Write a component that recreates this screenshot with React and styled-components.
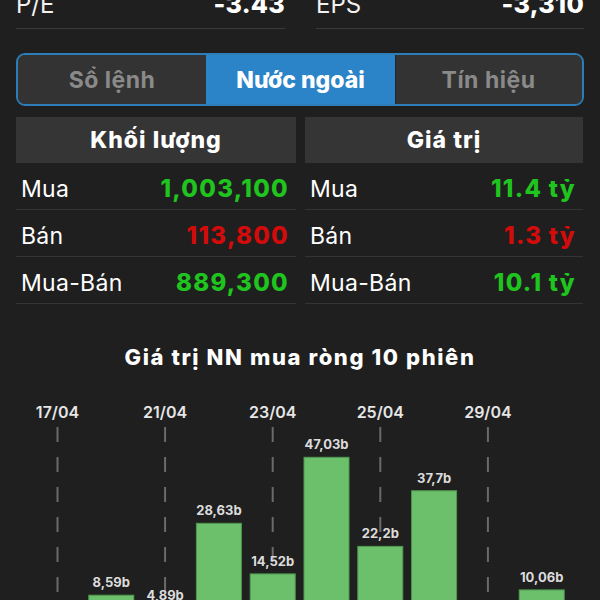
import React from "react";
import styled, { createGlobalStyle } from "styled-components";

const GlobalStyle = createGlobalStyle`
  html, body {
    margin: 0;
    padding: 0;
    background: #1f1f1f;
    overflow: hidden;
  }
  body {
    font-family: Inter, "Noto Sans", "DejaVu Sans", sans-serif;
    color: #ffffff;
    -webkit-font-smoothing: antialiased;
  }
`;

const Screen = styled.div`
  width: 600px;
  height: 600px;
  overflow: hidden;
  background: #1f1f1f;
  display: flex;
  flex-direction: column;
`;

const Content = styled.div`
  padding: 0 16px;
  margin-top: -15px;
  display: flex;
  flex-direction: column;
`;

const StatsRow = styled.div`
  display: grid;
  grid-template-columns: 269px 268px;
  column-gap: 31px;
`;

const StatCell = styled.div`
  display: flex;
  justify-content: space-between;
  align-items: baseline;
  height: 44px;
  line-height: 39px;
  border-bottom: 1px solid #3a3a3a;
  box-sizing: border-box;
`;

const StatLabel = styled.span`
  font-size: 24px;
  font-weight: 400;
  color: #f2f2f2;
`;

const StatValue = styled.span`
  font-size: 25px;
  font-weight: 800;
  color: #ffffff;
  letter-spacing: 0.3px;
`;

const Segmented = styled.div`
  margin-top: 24px;
  height: 53px;
  box-sizing: border-box;
  border: 2px solid #2d7db9;
  border-radius: 9px;
  overflow: hidden;
  display: grid;
  grid-template-columns: 188px 189px 1fr;
  background: #333333;
`;

const Segment = styled.div`
  display: flex;
  align-items: center;
  justify-content: center;
  font-size: 23px;
  font-weight: ${(p) => (p.$active ? 800 : 700)};
  color: ${(p) => (p.$active ? "#ffffff" : "#8a8a8a")};
  background: ${(p) => (p.$active ? "#2b84c7" : "#333333")};
  letter-spacing: ${(p) => (p.$active ? "0" : "0.5px")};
  box-shadow: ${(p) => (p.$last ? "inset 1px 0 0 #262626" : "none")};
`;

const Tables = styled.div`
  margin-top: 11px;
  display: grid;
  grid-template-columns: 280px 278px;
  column-gap: 9px;
`;

const Table = styled.div`
  display: flex;
  flex-direction: column;
`;

const TableHeader = styled.div`
  height: 46px;
  background: #353535;
  display: flex;
  align-items: center;
  justify-content: center;
  font-size: 23px;
  font-weight: 800;
  letter-spacing: 1px;
  color: #ffffff;
`;

const Row = styled.div`
  height: 47px;
  box-sizing: border-box;
  border-bottom: 1px solid #343434;
  display: flex;
  align-items: center;
  justify-content: space-between;
  padding: 5px 7px 0 5px;
`;

const RowLabel = styled.span`
  font-size: 23px;
  font-weight: 400;
  letter-spacing: 0.3px;
  color: #ffffff;
`;

const RowValue = styled.span`
  font-size: 24px;
  font-weight: 800;
  letter-spacing: 1.3px;
  color: ${(p) => (p.$tone === "up" ? "#1fc41f" : "#d20b0b")};
`;

const ChartTitle = styled.h2`
  margin: 40px 0 0;
  text-align: center;
  font-size: 22px;
  font-weight: 800;
  letter-spacing: 1.6px;
  color: #ffffff;
  line-height: 26px;
`;

const ChartBox = styled.div`
  margin-top: 20px;
  width: 600px;
  height: 260px;
`;

const sessions = [
  { date: "17/04", value: null },
  { date: "18/04", value: 8.59 },
  { date: "21/04", value: 4.89 },
  { date: "22/04", value: 28.63 },
  { date: "23/04", value: 14.52 },
  { date: "24/04", value: 47.03 },
  { date: "25/04", value: 22.2 },
  { date: "28/04", value: 37.7 },
  { date: "29/04", value: null },
  { date: "02/05", value: 10.06 },
];

const volume = [
  { label: "Mua", value: "1,003,100", tone: "up" },
  { label: "Bán", value: "113,800", tone: "down" },
  { label: "Mua-Bán", value: "889,300", tone: "up" },
];

const worth = [
  { label: "Mua", value: "11.4 tỷ", tone: "up" },
  { label: "Bán", value: "1.3 tỷ", tone: "down" },
  { label: "Mua-Bán", value: "10.1 tỷ", tone: "up" },
];

function NetChart() {
  const x0 = 57.5;
  const step = 53.8;
  const barW = 45;
  const zeroY = 236;
  const scale = 3.587;
  const fmt = (v) => `${String(v).replace(".", ",")}b`;
  return (
    <svg width="600" height="260" viewBox="0 0 600 260">
      {sessions.map((s, i) =>
        i % 2 === 0 ? (
          <g key={`d${i}`}>
            <text
              x={x0 + i * step}
              y={28}
              textAnchor="middle"
              fill="#e6e6e6"
              fontSize="16"
              fontWeight="600"
              fontFamily="Inter, sans-serif"
            >
              {s.date}
            </text>
            <line
              x1={x0 + i * step}
              x2={x0 + i * step}
              y1={37}
              y2={260}
              stroke="#6a6a6a"
              strokeWidth="2"
              strokeDasharray="15 15"
            />
          </g>
        ) : null
      )}
      {sessions.map((s, i) => {
        if (s.value == null) return null;
        const h = s.value * scale;
        const cx = x0 + i * step;
        return (
          <g key={`b${i}`}>
            <rect
              x={cx - barW / 2}
              y={zeroY - h}
              width={barW}
              height={h}
              fill="#6cbf6b"
              stroke="#4f9a4e"
              strokeWidth="1"
            />
            <text
              x={cx}
              y={zeroY - h - 8}
              textAnchor="middle"
              fill="#dcdcdc"
              fontSize="13"
              fontWeight="700"
              fontFamily="Inter, sans-serif"
            >
              {fmt(s.value)}
            </text>
          </g>
        );
      })}
    </svg>
  );
}

export default function App() {
  return (
    <Screen>
      <GlobalStyle />
      <Content>
        <StatsRow>
          <StatCell>
            <StatLabel>P/E</StatLabel>
            <StatValue>-3.43</StatValue>
          </StatCell>
          <StatCell>
            <StatLabel>EPS</StatLabel>
            <StatValue>-3,310</StatValue>
          </StatCell>
        </StatsRow>
        <Segmented>
          <Segment>Sổ lệnh</Segment>
          <Segment $active>Nước ngoài</Segment>
          <Segment $last>Tín hiệu</Segment>
        </Segmented>
        <Tables>
          <Table>
            <TableHeader>Khối lượng</TableHeader>
            {volume.map((r) => (
              <Row key={r.label}>
                <RowLabel>{r.label}</RowLabel>
                <RowValue $tone={r.tone}>{r.value}</RowValue>
              </Row>
            ))}
          </Table>
          <Table>
            <TableHeader>Giá trị</TableHeader>
            {worth.map((r) => (
              <Row key={r.label}>
                <RowLabel>{r.label}</RowLabel>
                <RowValue $tone={r.tone}>{r.value}</RowValue>
              </Row>
            ))}
          </Table>
        </Tables>
        <ChartTitle>Giá trị NN mua ròng 10 phiên</ChartTitle>
      </Content>
      <ChartBox>
        <NetChart />
      </ChartBox>
    </Screen>
  );
}
